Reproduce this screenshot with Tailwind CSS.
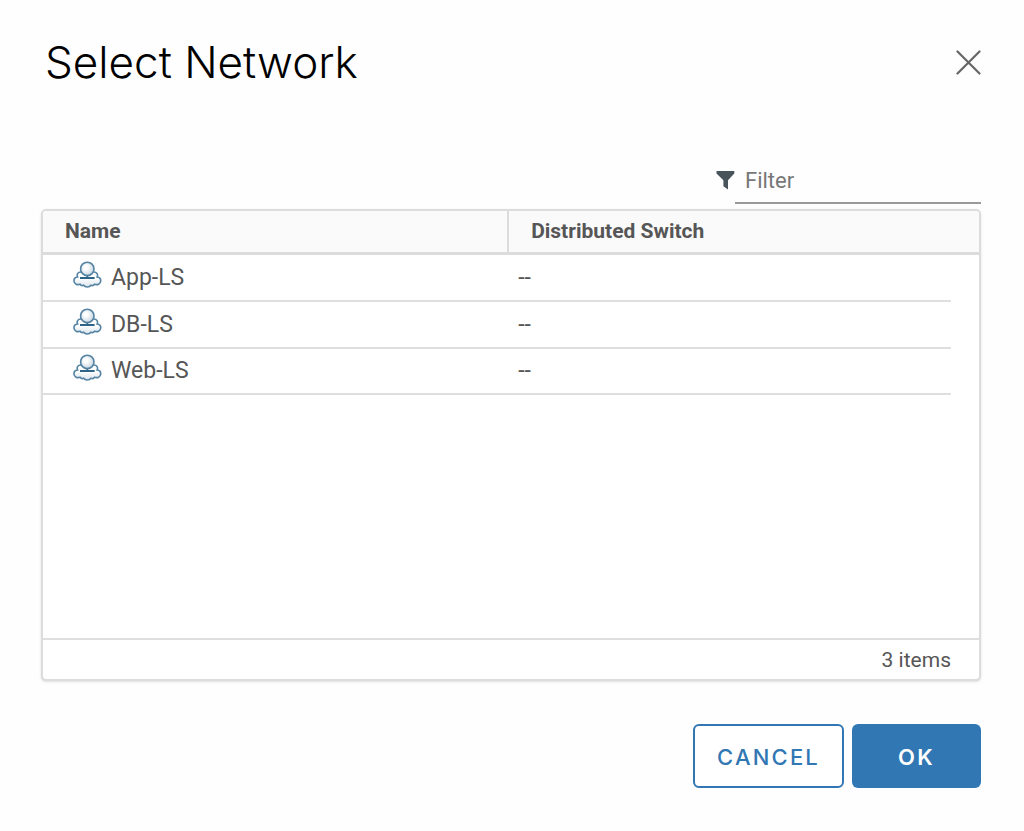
<!DOCTYPE html>
<html lang="en">
<head>
<meta charset="utf-8">
<meta name="viewport" content="width=device-width, initial-scale=1">
<title>Select Network</title>
<script src="https://cdn.jsdelivr.net/npm/@tailwindcss/browser@4"></script>
</head>
<body class="bg-[#fefefe] font-['Roboto','Liberation_Sans',sans-serif] text-[22px] leading-7 text-[#565656]">
<svg class="block h-0 w-0" aria-hidden="true">
  <defs>
    <radialGradient id="ball" cx="0.4" cy="0.4" r="0.65"><stop offset="0.2" stop-color="#fff"/><stop offset="1" stop-color="#c3d3de"/></radialGradient>
    <linearGradient id="cloud" x1="0" y1="0" x2="0" y2="1"><stop offset="0.4" stop-color="#fff"/><stop offset="1" stop-color="#dbe5ec"/></linearGradient>
    <symbol id="net" viewBox="0 0 30 28">
      <path d="M8 11C4.500 11 3.500 13.500 4.600 16C2 16.300.8 18.200 1 20.200C1.300 23 4.200 24.300 7 23.200C8 24.600 9.400 24.800 10.600 24.200C12.200 26.500 16.400 26.500 18 24.200C19.200 24.800 20.600 24.600 21.600 23.200C24.500 24.300 27.400 23 27.700 20.200C27.900 18.200 26.700 16.300 24.100 16C25.200 13.500 24.100 11 20.700 11" fill="url(#cloud)" stroke="#5583a3" stroke-width="1.600"/>
      <path d="M14.300 14v3M7 17h14.600" fill="none" stroke="#2d6488" stroke-width="1.800"/>
      <circle cx="14.300" cy="7.900" r="6.700" fill="url(#ball)" stroke="#5583a3" stroke-width="1.600"/>
    </symbol>
  </defs>
</svg>
<main role="dialog" aria-labelledby="title" class="flex min-h-screen flex-col pt-9 pr-[43px] pb-[43px] pl-[41px]">
  <header class="flex items-center justify-between pl-1">
    <h1 id="title" class="font-['Inter',sans-serif] text-[44px] leading-[52px] font-light text-black">Select Network</h1>
    <button type="button" aria-label="Close" class="text-[#666]">
      <svg class="block h-[26px] w-[26px]" viewBox="0 0 26 26" fill="none" stroke="currentColor" stroke-width="2.200" stroke-linecap="round"><path d="M2.500 2.500l22 22M24.500 2.500l-22 22"/></svg>
    </button>
  </header>
  <div class="mt-[70px] flex items-center justify-end">
    <svg class="h-5 w-[19px] text-[#49535a]" viewBox="0 0 19 20" fill="currentColor" aria-hidden="true"><path d="M.5 0h17.800v2.500l-6.300 6.700V18.500L7.400 15.200v-6L.5 2.500Z"/></svg>
    <input type="text" aria-label="Filter" placeholder="Filter" class="h-[46px] w-[246px] border-b-2 border-[#999] bg-transparent px-2.5 outline-none placeholder:text-[#777]">
  </div>
  <section class="mt-[5px] flex flex-1 flex-col overflow-hidden rounded-[5px] border-2 border-[#dcdcdc] bg-white shadow-sm">
    <table class="w-full table-fixed border-separate border-spacing-0 text-left text-[23px]">
      <colgroup><col class="w-[49.8%]"><col><col class="w-7"></colgroup>
      <thead class="bg-[#fafafa] text-[21px]">
        <tr>
          <th scope="col" class="h-11 border-r-2 border-b-3 border-[#dcdcdc] px-[22px] pb-0.5 font-bold">Name</th>
          <th scope="col" colspan="2" class="border-b-3 border-[#dcdcdc] px-[22px] pb-0.5 font-bold">Distributed Switch</th>
        </tr>
      </thead>
      <tbody>
        <tr>
          <td class="h-[47px] border-b-2 border-[#dfdfdf] pl-[30px]"><div class="flex items-center gap-2"><svg class="-mt-1.5 h-7 w-[30px]" aria-hidden="true"><use href="#net"/></svg>App-LS</div></td>
          <td class="border-b-2 border-[#dfdfdf] pl-[9px]">--</td><td></td>
        </tr>
        <tr>
          <td class="h-[47px] border-b-2 border-[#dfdfdf] pl-[30px]"><div class="flex items-center gap-2"><svg class="-mt-1.5 h-7 w-[30px]" aria-hidden="true"><use href="#net"/></svg>DB-LS</div></td>
          <td class="border-b-2 border-[#dfdfdf] pl-[9px]">--</td><td></td>
        </tr>
        <tr>
          <td class="h-[46px] border-b-2 border-[#dfdfdf] pl-[30px]"><div class="flex items-center gap-2"><svg class="-mt-1.5 h-7 w-[30px]" aria-hidden="true"><use href="#net"/></svg>Web-LS</div></td>
          <td class="border-b-2 border-[#dfdfdf] pl-[9px]">--</td><td></td>
        </tr>
      </tbody>
    </table>
    <div class="mt-auto flex h-[41px] items-center justify-end border-t-2 border-[#dfdfdf] pr-7 text-[21px]">3 items</div>
  </section>
  <footer class="mt-[43px] flex justify-end gap-2 font-['Inter',sans-serif] text-[22px] tracking-widest">
    <button type="button" class="h-16 rounded-md border-2 border-[#3177b4] bg-white px-[22px] pt-0.5 font-medium text-[#3177b4]">CANCEL</button>
    <button type="button" class="h-16 w-[129px] rounded-md bg-[#3177b4] pt-0.5 font-semibold text-white">OK</button>
  </footer>
</main>
</body>
</html>
